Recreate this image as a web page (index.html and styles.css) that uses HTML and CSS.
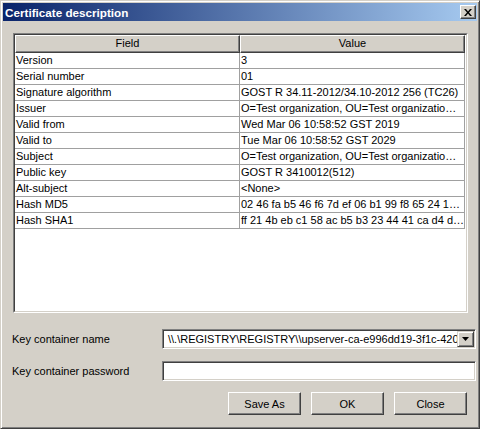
FILE: index.html
```html
<!DOCTYPE html>
<html lang="en">
<head>
    <meta charset="UTF-8">
    <title>Certificate description</title>
    <link rel="stylesheet" href="styles.css">
</head>
<body>
    <div class="window">
        <div class="titlebar">
            <span class="title">Certificate description</span>
            <button class="close-x" title="Close">
                <svg width="8" height="7" viewBox="0 0 8 7">
                    <path d="M0 0h2l2 2.5L6 0h2L5 3.5 8 7H6L4 4.5 2 7H0l3-3.5z" fill="#000"/>
                </svg>
            </button>
        </div>

        <div class="content">
            <div class="list">
                <div class="list-inner">
                    <div class="list-head">
                        <div class="head-cell">Field</div>
                        <div class="head-cell">Value</div>
                    </div>
                    <div class="row"><div class="cell">Version</div><div class="cell">3</div></div>
                    <div class="row"><div class="cell">Serial number</div><div class="cell">01</div></div>
                    <div class="row"><div class="cell">Signature algorithm</div><div class="cell">GOST R 34.11-2012/34.10-2012 256 (TC26)</div></div>
                    <div class="row"><div class="cell">Issuer</div><div class="cell">O=Test organization, OU=Test organizatio…</div></div>
                    <div class="row"><div class="cell">Valid from</div><div class="cell">Wed Mar 06 10:58:52 GST 2019</div></div>
                    <div class="row"><div class="cell">Valid to</div><div class="cell">Tue Mar 06 10:58:52 GST 2029</div></div>
                    <div class="row"><div class="cell">Subject</div><div class="cell">O=Test organization, OU=Test organizatio…</div></div>
                    <div class="row"><div class="cell">Public key</div><div class="cell">GOST R 3410012(512)</div></div>
                    <div class="row"><div class="cell">Alt-subject</div><div class="cell">&lt;None&gt;</div></div>
                    <div class="row"><div class="cell">Hash MD5</div><div class="cell">02 46 fa b5 46 f6 7d ef 06 b1 99 f8 65 24 1…</div></div>
                    <div class="row"><div class="cell">Hash SHA1</div><div class="cell">ff 21 4b eb c1 58 ac b5 b3 23 44 41 ca d4 d…</div></div>
                </div>
            </div>

            <div class="form-row first">
                <label class="label">Key container name</label>
                <div class="combo">
                    <span class="combo-text">\\.\REGISTRY\REGISTRY\\upserver-ca-e996dd19-3f1c-4204-9a51</span>
                    <span class="combo-btn">
                        <svg width="7" height="4" viewBox="0 0 7 4"><path d="M0 0h7L3.5 4z" fill="#000"/></svg>
                    </span>
                </div>
            </div>

            <div class="form-row">
                <label class="label">Key container password</label>
                <input class="edit" type="password">
            </div>

            <div class="buttons">
                <button class="button">Save As</button>
                <button class="button">OK</button>
                <button class="button">Close</button>
            </div>
        </div>
    </div>
</body>
</html>
```

FILE: styles.css
```css
body {
    margin: 0;
    font-family: "Liberation Sans", Arial, sans-serif;
    font-size: 11px;
    color: #000;
    background-color: #d4d0c8;
}

.window {
    box-sizing: border-box;
    width: 480px;
    height: 429px;
    padding: 2px;
    background-color: #d4d0c8;
    border: 1px solid;
    border-color: #d4d0c8 #404040 #404040 #d4d0c8;
    box-shadow: inset 1px 1px #fff, inset -1px -1px #808080;
}

.titlebar {
    display: flex;
    align-items: center;
    justify-content: space-between;
    height: 18px;
    padding: 0 1px 0 2px;
    background: linear-gradient(to right, #0a246a, #a6caf0);
}

.title {
    color: #fff;
    font-weight: bold;
    font-size: 11.7px;
}

.close-x {
    display: flex;
    align-items: center;
    justify-content: center;
    box-sizing: border-box;
    width: 16px;
    height: 14px;
    padding: 0;
    background-color: #d4d0c8;
    border: 1px solid;
    border-color: #fff #404040 #404040 #fff;
    box-shadow: inset -1px -1px #808080;
}

.content {
    padding: 12px 0 0 10px;
}

/* list view */
.list {
    box-sizing: border-box;
    width: 455px;
    height: 280px;
    border: 1px solid;
    border-color: #808080 #fff #fff #808080;
}

.list-inner {
    box-sizing: border-box;
    height: 100%;
    background-color: #fff;
    border: 1px solid;
    border-color: #404040 #d4d0c8 #d4d0c8 #404040;
}

.list-head,
.row {
    display: grid;
    grid-template-columns: 225px 225px;
}

.head-cell {
    box-sizing: border-box;
    height: 18px;
    line-height: 15px;
    text-align: center;
    background-color: #d4d0c8;
    border: 1px solid;
    border-color: #fff #404040 #404040 #fff;
    box-shadow: inset -1px -1px #808080;
}

.cell {
    box-sizing: border-box;
    height: 16px;
    line-height: 15px;
    padding-left: 1px;
    white-space: nowrap;
    overflow: hidden;
    border-right: 1px solid #a0a0a0;
    border-bottom: 1px solid #a0a0a0;
}

/* form */
.form-row {
    display: grid;
    grid-template-columns: 149px 314px;
    align-items: center;
    height: 20px;
    margin-top: 12px;
}

.form-row.first {
    margin-top: 16px;
}

.label {
    margin-left: -1px;
}

.combo,
.edit {
    box-sizing: border-box;
    height: 20px;
    background-color: #fff;
    border: 1px solid;
    border-color: #808080 #fff #fff #808080;
    box-shadow: inset 1px 1px #404040, inset -1px -1px #d4d0c8;
}

.combo {
    display: flex;
    align-items: center;
    padding: 1px;
    overflow: hidden;
}

.combo-text {
    flex: 1;
    padding-left: 4px;
    white-space: nowrap;
    overflow: hidden;
}

.combo-btn {
    display: flex;
    align-items: center;
    justify-content: center;
    box-sizing: border-box;
    flex: none;
    width: 17px;
    height: 16px;
    background-color: #d4d0c8;
    border: 1px solid;
    border-color: #d4d0c8 #404040 #404040 #d4d0c8;
    box-shadow: inset 1px 1px #fff, inset -1px -1px #808080;
}

.edit {
    width: 314px;
    margin: 0;
    padding: 0 3px;
    font: inherit;
    outline: none;
}

.buttons {
    display: flex;
    justify-content: flex-end;
    gap: 10px;
    margin: 11px 10px 0 0;
}

.button {
    box-sizing: border-box;
    width: 73px;
    height: 23px;
    padding: 0;
    font: inherit;
    color: #000;
    background-color: #d4d0c8;
    border: 1px solid;
    border-color: #fff #404040 #404040 #fff;
    box-shadow: inset -1px -1px #808080;
}
```
